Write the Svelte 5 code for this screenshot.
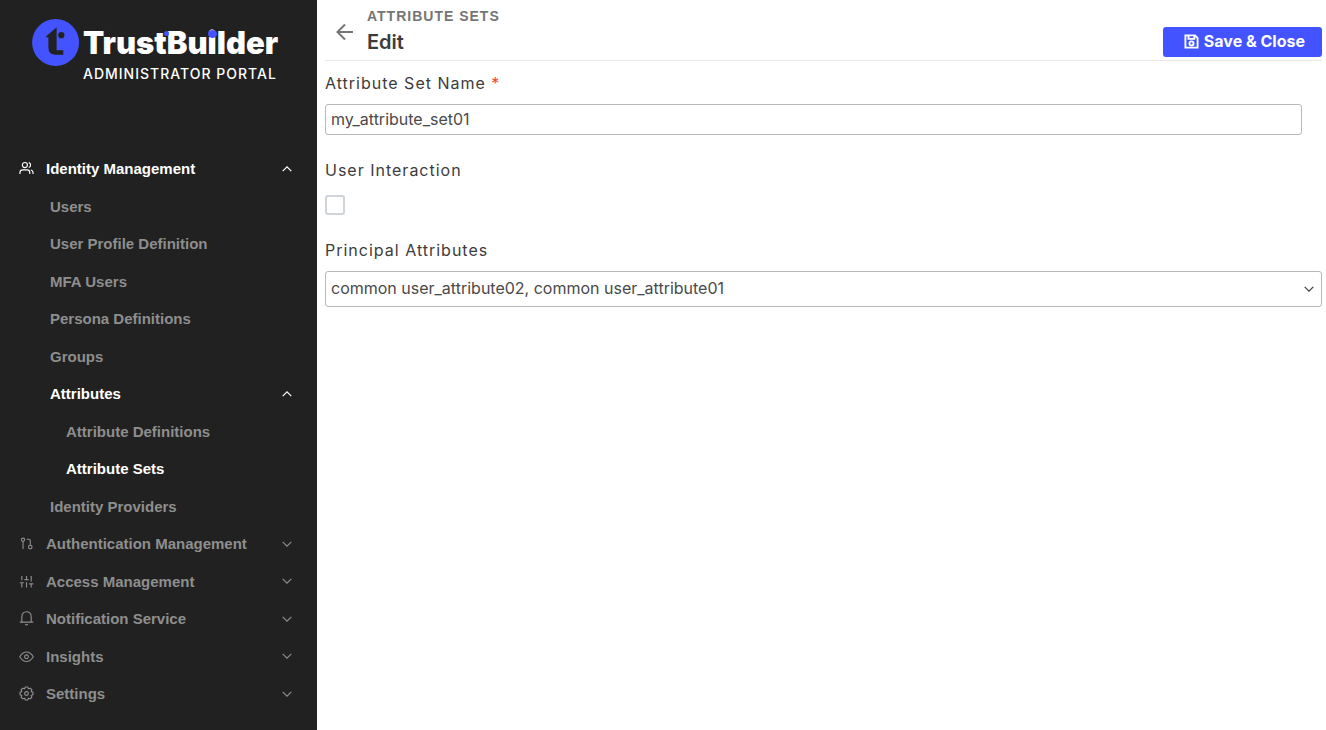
<script lang="ts">
  type NavItem = {
    label: string;
    level: number;
    icon?: string;
    active?: boolean;
    open?: boolean;
  };

  const items: NavItem[] = [
    { label: 'Identity Management', level: 0, icon: 'users', active: true, open: true },
    { label: 'Users', level: 1 },
    { label: 'User Profile Definition', level: 1 },
    { label: 'MFA Users', level: 1 },
    { label: 'Persona Definitions', level: 1 },
    { label: 'Groups', level: 1 },
    { label: 'Attributes', level: 1, active: true, open: true },
    { label: 'Attribute Definitions', level: 2 },
    { label: 'Attribute Sets', level: 2, active: true },
    { label: 'Identity Providers', level: 1 },
    { label: 'Authentication Management', level: 0, icon: 'flow', open: false },
    { label: 'Access Management', level: 0, icon: 'sliders', open: false },
    { label: 'Notification Service', level: 0, icon: 'bell', open: false },
    { label: 'Insights', level: 0, icon: 'eye', open: false },
    { label: 'Settings', level: 0, icon: 'gear', open: false }
  ];

  let name: string = $state('my_attribute_set01');
  let userInteraction: boolean = $state(false);
</script>

<div class="layout">
  <aside class="sidebar">
    <div class="brand">
      <svg class="brand-mark" viewBox="0 0 48 48" aria-hidden="true">
        <circle cx="23.6" cy="24.5" r="23.5" fill="#4353ff" />
        <path d="M14 18.5L24.6 9.2V31.8Q24.6 32.3 25.2 32.3H31.3V36.8H23.5Q16.4 36.8 16.4 29.5V19.3H14.8Q13.5 19.2 14 18.5Z" fill="#212121" />
        <circle cx="29.3" cy="17.2" r="3.1" fill="#212121" />
      </svg>
      <div class="brand-text">
        <div class="brand-name">Trus<span class="dot-t">t</span>Bu<span class="dot-i">i</span>lder</div>
        <div class="brand-sub">ADMINISTRATOR PORTAL</div>
      </div>
    </div>

    <nav aria-label="Main">
      <ul>
        {#each items as item}
          <li>
            <a href="#/" class="level-{item.level}" class:active={item.active}>
              {#if item.icon}
                <svg class="icon" viewBox="0 0 16 16" aria-hidden="true">
                  {#if item.icon === 'users'}
                    <circle cx="6.3" cy="4.3" r="2.7" />
                    <path d="M1 13.8V12.5Q1 9.4 4 9.4H8.5Q11.5 9.4 11.5 12.5V13.8M10.4 1.7A2.7 2.7 0 0 1 10.4 6.9M12.6 9.6Q15 10.2 15 12.8V13.8" />
                  {:else if item.icon === 'flow'}
                    <circle cx="4.3" cy="4" r="1.7" />
                    <circle cx="12" cy="11.8" r="1.9" />
                    <path d="M4.3 5.7V13.8M8.3 3.5H10.5Q12 3.5 12 5V9.9" />
                  {:else if item.icon === 'sliders'}
                    <path d="M3 2V6.7M3 9.5V14.5M8 2V5.8M8 8.7V14.5M13 2V8M13 10.8V14.5M.8 9.3H5.2M5.8 6H10.2M10.8 10.5H15.2" />
                  {:else if item.icon === 'bell'}
                    <path d="M.8 11.8H15.2M3 11.7V6.3C3 3 5 .8 8 .8S13 3 13 6.3V11.7M6.6 14Q8 15.5 9.4 14" />
                  {:else if item.icon === 'eye'}
                    <path d="M.8 8.3Q3.8 3.2 8 3.2T15.2 8.3Q12.2 13.3 8 13.3T.8 8.3Z" />
                    <circle cx="8" cy="8.3" r="2" />
                  {:else}
                    <path d="M9.2 1.1L10.1 3 12 2.3 13.7 4 13 5.9 14.9 6.8V9.2L13 10.1 13.7 12 12 13.7 10.1 13 9.2 14.9H6.8L5.9 13 4 13.7 2.3 12 3 10.1 1.1 9.2V6.8L3 5.9 2.3 4 4 2.3 5.9 3 6.8 1.1Z" />
                    <circle cx="8" cy="8" r="2" />
                  {/if}
                </svg>
              {/if}
              <span>{item.label}</span>
              {#if item.open !== undefined}
                <svg class="caret" viewBox="0 0 10 6" aria-hidden="true">
                  <path d={item.open ? 'M.7 5.2L5 .9 9.3 5.2' : 'M.7 .8L5 5.1 9.3 .8'} />
                </svg>
              {/if}
            </a>
          </li>
        {/each}
      </ul>
    </nav>
  </aside>

  <main>
    <header>
      <button class="back" type="button" aria-label="Back">
        <svg viewBox="0 0 18 18" aria-hidden="true">
          <path d="M17 9H2M9 1.5L1.5 9 9 16.5" />
        </svg>
      </button>
      <div class="titles">
        <div class="section">ATTRIBUTE SETS</div>
        <h1>Edit</h1>
      </div>
      <button class="save" type="button">
        <svg viewBox="0 0 16 16" aria-hidden="true">
          <path d="M1.5 1.5H11.7L14.5 4.3V14.5H1.5ZM4.8 1.8V5.2H11V1.8" />
          <circle cx="8" cy="10" r="2.2" />
        </svg>
        Save &amp; Close
      </button>
    </header>

    <form onsubmit={(e) => e.preventDefault()}>
      <div class="field">
        <label for="set-name">Attribute Set Name <span class="required">*</span></label>
        <input id="set-name" class="text" type="text" bind:value={name} />
      </div>
      <div class="field">
        <label for="interaction">User Interaction</label>
        <input id="interaction" class="check" type="checkbox" bind:checked={userInteraction} />
      </div>
      <div class="field">
        <label for="principal">Principal Attributes</label>
        <div class="select-wrap">
          <select id="principal">
            <option>common user_attribute02, common user_attribute01</option>
          </select>
          <svg class="caret" viewBox="0 0 10 6" aria-hidden="true">
            <path d="M.7 .8L5 5.1 9.3 .8" />
          </svg>
        </div>
      </div>
    </form>
  </main>
</div>

<style>
  :global(body) {
    background: #fff;
  }

  .layout {
    display: grid;
    grid-template-columns: 317px minmax(0, 1fr);
    min-height: 100vh;
    font-family: Inter, "Liberation Sans", sans-serif;
    color: #3c3c3c;
  }

  .sidebar {
    background: #212121;
    padding-bottom: 16px;
  }

  .brand {
    display: flex;
    gap: 3px;
    height: 132px;
    padding: 18px 0 0 32px;
    color: #fff;
  }

  .brand-mark {
    width: 48px;
    height: 48px;
    flex: none;
  }

  .brand-text {
    padding-top: 8px;
  }

  .brand-name {
    font-size: 31px;
    font-weight: 900;
    line-height: 34px;
    white-space: nowrap;
  }

  .dot-t,
  .dot-i {
    position: relative;
  }

  .dot-t::after,
  .dot-i::after {
    content: '';
    position: absolute;
    border-radius: 50%;
    background: #4353ff;
  }

  .dot-t::after {
    top: 7px;
    right: -2px;
    width: 5px;
    height: 5px;
  }

  .dot-i::after {
    top: 6px;
    left: 0;
    width: 9px;
    height: 8px;
  }

  .brand-sub {
    font-size: 14px;
    font-weight: 500;
    line-height: 28px;
    letter-spacing: 1px;
    white-space: nowrap;
  }

  ul {
    list-style: none;
    margin: 0;
    padding: 0;
  }

  nav a {
    display: flex;
    align-items: center;
    padding: 0 25px 0 19px;
    font-family: "Liberation Sans", Arial, sans-serif;
    font-size: 15px;
    font-weight: bold;
    line-height: 2.5;
    color: #8e8e8e;
    text-decoration: none;
  }

  nav a.level-1 {
    padding-left: 50px;
  }

  nav a.level-2 {
    padding-left: 66px;
  }

  nav a.active {
    color: #fff;
  }

  .icon {
    width: 15px;
    height: 15px;
    margin-right: 12px;
    fill: none;
    stroke: currentColor;
    stroke-width: 1.2;
    stroke-linejoin: round;
  }

  .caret {
    width: 10px;
    height: 6px;
    margin-left: auto;
    fill: none;
    stroke: currentColor;
    stroke-width: 1.2;
  }

  main {
    padding: 0 4px 0 8px;
  }

  header {
    display: flex;
    height: 60px;
    border-bottom: 1px solid #e8e8e8;
  }

  button {
    border: 0;
    cursor: pointer;
  }

  .back {
    width: 42px;
    padding: 4px 0 0 11px;
    background: none;
    color: #757575;
    text-align: left;
  }

  .back svg {
    display: block;
    width: 18px;
    height: 18px;
    fill: none;
    stroke: currentColor;
    stroke-width: 2;
  }

  .section {
    padding-top: 8px;
    font-family: "Liberation Sans", Arial, sans-serif;
    font-size: 14px;
    font-weight: bold;
    line-height: 16px;
    letter-spacing: 1px;
    color: #757575;
  }

  h1 {
    margin: 6px 0 0;
    font-size: 20px;
    font-weight: 600;
    line-height: 24px;
  }

  .save {
    display: flex;
    align-items: center;
    align-self: flex-end;
    gap: 5px;
    height: 30px;
    margin: 0 0 3px auto;
    padding: 0 17px 2px 21px;
    border-radius: 3px;
    background: #4353ff;
    color: #fff;
    font-family: inherit;
    font-size: 16px;
    font-weight: 700;
  }

  .save svg {
    width: 15px;
    height: 15px;
    fill: none;
    stroke: currentColor;
    stroke-width: 2;
  }

  .field {
    margin-bottom: 25px;
  }

  form {
    padding-top: 12px;
  }

  label {
    display: block;
    margin-bottom: 10px;
    font-size: 16px;
    line-height: 21px;
    letter-spacing: 1px;
  }

  .required {
    color: #f44336;
  }

  .text,
  select {
    display: block;
    box-sizing: border-box;
    border: 1px solid #b8b8b8;
    border-radius: 3px;
    background: #fff;
    color: #4a4a4a;
    font-family: inherit;
    font-size: 16px;
  }

  .text {
    width: calc(100% - 20px);
    height: 31px;
    padding: 0 5px 2px;
  }

  .check {
    display: block;
    appearance: none;
    width: 20px;
    height: 20px;
    margin: 14px 0 0;
    border: 2px solid #ced4da;
    border-radius: 3px;
    background: #fff;
  }

  .check:checked {
    background: #4353ff;
  }

  .select-wrap {
    position: relative;
  }

  select {
    appearance: none;
    width: 100%;
    height: 36px;
    padding: 0 28px 2px 5px;
  }

  .select-wrap .caret {
    position: absolute;
    top: 15px;
    right: 8px;
    pointer-events: none;
  }
</style>
